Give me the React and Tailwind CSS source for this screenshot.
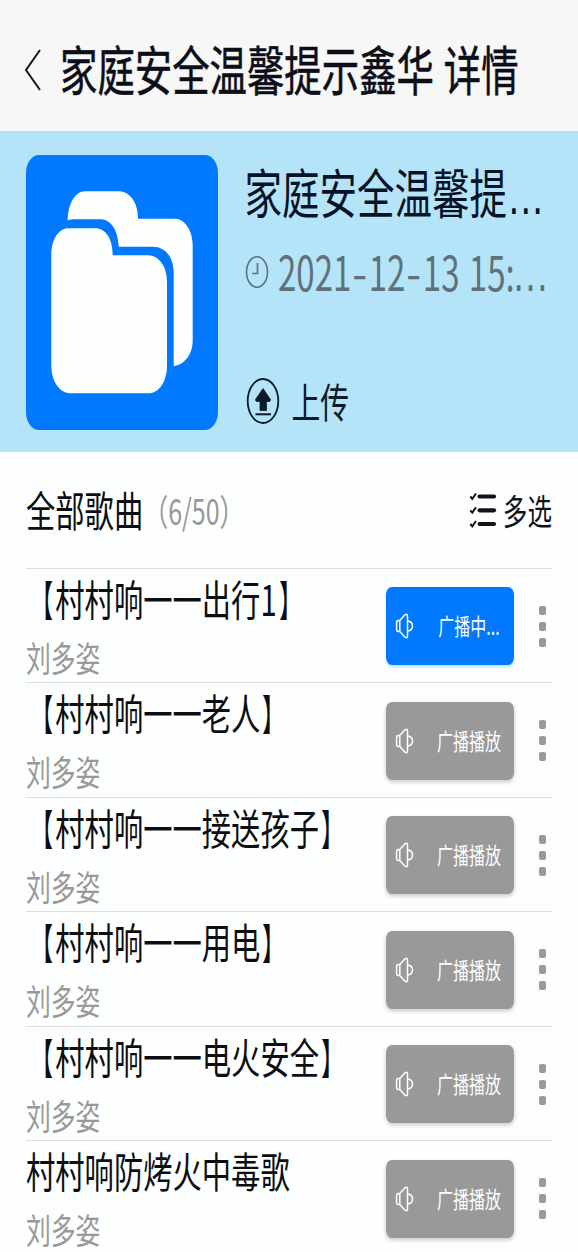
import React from "react";

const songs = [
  { title: "村村响一一出行1", author: "刘多姿", bracketed: true, playing: true },
  { title: "村村响一一老人", author: "刘多姿", bracketed: true },
  { title: "村村响一一接送孩子", author: "刘多姿", bracketed: true },
  { title: "村村响一一用电", author: "刘多姿", bracketed: true },
  { title: "村村响一一电火安全", author: "刘多姿", bracketed: true },
  { title: "村村响防烤火中毒歌", author: "刘多姿" },
];

// Tall, condensed lettering used across the page
function Tall({ className = "", children }) {
  return (
    <span className={`inline-block scale-y-[1.43] whitespace-pre leading-none ${className}`}>
      {children}
    </span>
  );
}

function Dash() {
  return <span className="mx-[3px] inline-block scale-x-[1.3]">-</span>;
}

function BackIcon() {
  return (
    <svg className="h-[46px] w-[20px] shrink-0" viewBox="0 0 20 46" fill="none" stroke="#15171c">
      <path d="M17 3 L3 23 L17 43" strokeWidth="2" />
    </svg>
  );
}

function FolderCover() {
  return (
    <svg className="h-[275px] w-[192px] shrink-0" viewBox="0 0 192 275">
      <rect width="192" height="275" rx="13" ry="18" fill="#0079fe" />
      <g fill="#fdfefe">
        <path d="M41.7 65.5C42 49 49 36.3 59 36.3H92.3C103 36.3 112 46 112 63.7H149C159 63.7 166.7 76 166.7 90V185C166.7 200 158 210 147.7 211V118.3C147.7 102 139 91.7 127.3 91.7H92.7C92 75 85 64.3 74 64.3H50C46 64.3 44 64.5 41.7 65.5Z" />
        <path d="M25.3 100C25.3 84 33 73.3 42.3 73.3H69C80 73.3 86.7 84 86.7 100.3H122.3C133 100.3 141 112 141 126.7V210C141 227 133 238.3 122.3 238.3H44.7C34 238.3 25.3 227 25.3 210Z" />
      </g>
    </svg>
  );
}

function ClockIcon() {
  return (
    <svg className="h-[34px] w-[24px] shrink-0" viewBox="0 0 24 34" fill="none" stroke="#5f7179">
      <ellipse cx="12" cy="17" rx="10.5" ry="15.3" strokeWidth="1.6" />
      <path d="M12.500 8V18.500H7" strokeWidth="1.7" />
    </svg>
  );
}

function UploadIcon() {
  return (
    <svg className="h-[48px] w-[34px] shrink-0" viewBox="0 0 34 48">
      <ellipse cx="17" cy="24" rx="15.3" ry="22" fill="none" stroke="#0d1a29" strokeWidth="1.8" />
      <path
        d="M17 11.500L24.500 22.500Q24.500 24.500 23 24.500H20.500V33.500H14V24.500H11Q9.500 24.500 9.500 22.500Z"
        fill="#0d1a29"
        stroke="#0d1a29"
        strokeWidth="0.8"
        strokeLinejoin="round"
      />
      <path d="M9.500 37.300H25" stroke="#0d1a29" strokeWidth="2" />
    </svg>
  );
}

function ChecklistIcon() {
  return (
    <svg className="h-[36px] w-[28px] shrink-0" viewBox="0 0 28 36" fill="none" stroke="#111318">
      {[4.5, 18.3, 32].map((y) => (
        <g key={y}>
          <path d={`M10.600 ${y}H25`} strokeWidth="4.2" strokeLinecap="round" />
          <path d={`M1.300 ${y}L3.300 ${y + 2.3}L7 ${y - 3}`} strokeWidth="2" />
        </g>
      ))}
    </svg>
  );
}

function SpeakerIcon() {
  return (
    <svg className="h-[28px] w-[20px] shrink-0" viewBox="0 0 20 28" fill="none" stroke="#fff" strokeWidth="1.5" strokeLinejoin="round">
      <path d="M4.800 8.500L10 2.800Q12.500 1.500 12.500 4V24Q12.500 26.500 10 25.200L4.800 19.500Z" />
      <path d="M4.800 8.500H3.200Q1.600 8.500 1.600 11V17Q1.600 19.500 3.200 19.500H4.800" />
      <path d="M12.500 9.300H14Q17.500 10.500 17.500 14Q17.500 17.700 14 18.800H12.500" />
    </svg>
  );
}

function MoreDots() {
  return (
    <div className="flex w-[7px] flex-col gap-[7px]">
      <i className="h-[9px] w-[7px] rounded-[2px] bg-[#999]" />
      <i className="h-[9px] w-[7px] rounded-[2px] bg-[#999]" />
      <i className="h-[9px] w-[7px] rounded-[2px] bg-[#999]" />
    </div>
  );
}

function SongTitle({ song }) {
  return (
    <Tall className="text-[29.300px] text-[#0c0e12]">
      {song.bracketed && (
        <span className="inline-block origin-[90%_50%] -translate-x-[1.500px] scale-x-[0.75]">【</span>
      )}
      {song.title}
      {song.bracketed && (
        <span className="inline-block origin-[10%_50%] translate-x-[1.500px] scale-x-[0.75]">】</span>
      )}
    </Tall>
  );
}

function SongRow({ song }) {
  return (
    <li className="flex h-[114.500px] shrink-0 items-start border-t border-[#dcdfdf]">
      <div className="flex min-w-0 flex-1 flex-col items-start pt-[15px]">
        <SongTitle song={song} />
        <Tall className="mt-[31px] text-[24.800px] text-[#999]">{song.author}</Tall>
      </div>
      <button
        className={`mt-[18.500px] flex h-[78px] w-[128px] shrink-0 items-center rounded-[6px/8px] pl-[9px] text-white ${
          song.playing ? "bg-[#0079fe] shadow-[0_2px_3px_#bfe0fb]" : "bg-[#999] shadow-[0_2px_4px_#c8c8c8]"
        }`}
      >
        <SpeakerIcon />
        <span className="flex-1 pb-[2px] pl-[10px] text-center">
          <Tall className="text-[16px]">{song.playing ? "广播中..." : "广播播放"}</Tall>
        </span>
      </button>
      <div className="ml-[25px] mr-[6.500px] mt-[37px]">
        <MoreDots />
      </div>
    </li>
  );
}

export default function App() {
  return (
    <div className="flex h-[1252px] w-[578px] flex-col overflow-hidden bg-[#fdfefe] font-['Noto_Sans_CJK_SC',sans-serif] text-[#0d0f18]">
      <header className="flex h-[131px] shrink-0 items-center bg-[#f7f7f7] pl-[23px] pt-[8px]">
        <BackIcon />
        <Tall className="mb-[2px] ml-[17px] text-[37.400px] [-webkit-text-stroke:0.4px_#0d0f18]">
          家庭安全温馨提示鑫华 <span className="ml-[1.500px]">详情</span>
        </Tall>
      </header>

      <section className="flex h-[321px] shrink-0 bg-[#b5e4f8] pl-[26px] pt-[24px]">
        <FolderCover />
        <div className="flex flex-col items-start pl-[26.500px]">
          <Tall className="mt-[18px] text-[37.500px] text-[#061326]">
            家庭安全温馨提<span className="font-['Liberation_Sans']">…</span>
          </Tall>
          <div className="mt-[40px] flex h-[34px] items-center text-[#5f7179]">
            <ClockIcon />
            <Tall className="ml-[9.500px] mt-[5px] text-[33px] [word-spacing:2px]">
              2021
              <Dash />
              12
              <Dash />
              13 15:<span className="-ml-[3px] font-['Liberation_Sans'] text-[37.500px] leading-none">…</span>
            </Tall>
          </div>
          <div className="ml-[1px] mt-[88px] flex h-[48px] items-center text-[#0d1a29]">
            <UploadIcon />
            <Tall className="ml-[12px] mt-[2px] text-[28.800px]">上传</Tall>
          </div>
        </div>
      </section>

      <div className="flex h-[115.500px] shrink-0 items-center pl-[26px] pr-[26px]">
        <Tall className="text-[29.300px] text-[#0c0e12]">全部歌曲</Tall>
        <Tall className="text-[25px] text-[#999]">（6/50）</Tall>
        <div className="ml-auto flex items-center text-[#111318]">
          <ChecklistIcon />
          <Tall className="mb-[1px] ml-[5.500px] text-[24.600px]">多选</Tall>
        </div>
      </div>

      <ul className="flex flex-col pl-[26px] pr-[26px]">
        {songs.map((song) => (
          <SongRow key={song.title} song={song} />
        ))}
      </ul>
    </div>
  );
}
